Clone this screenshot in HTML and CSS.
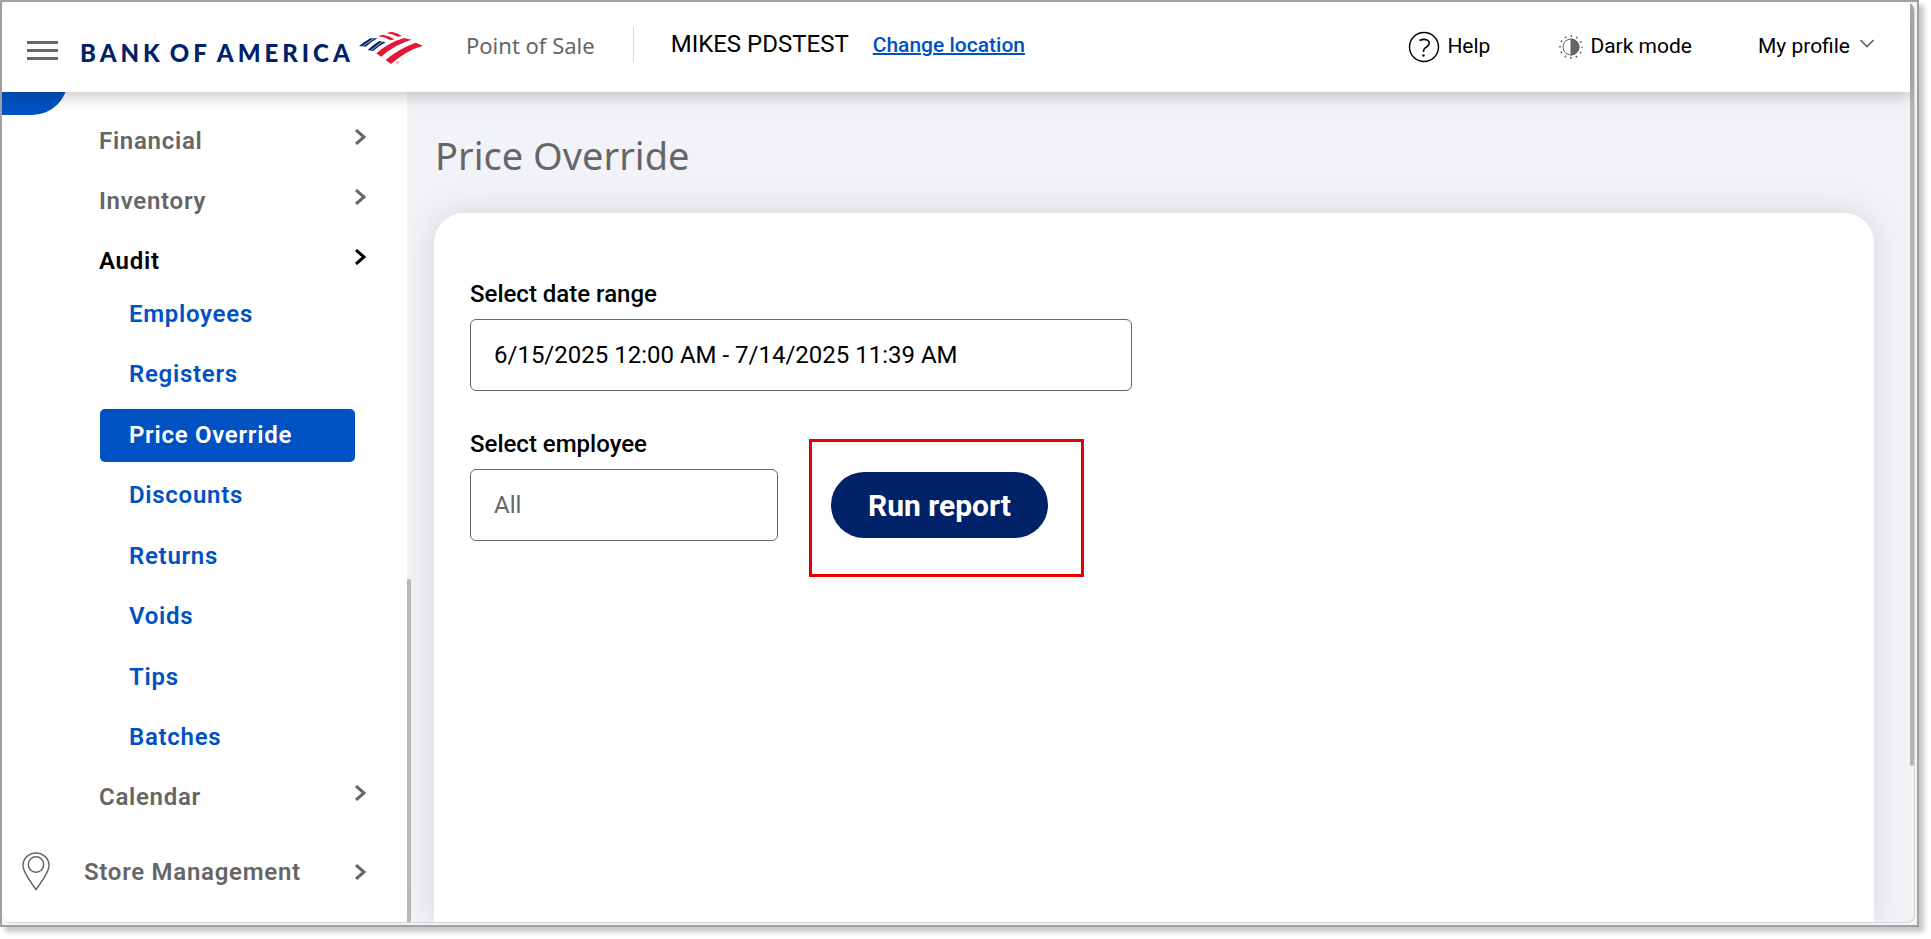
FILE: index.html
```html
<!DOCTYPE html>
<html lang="en">
<head>
  <meta charset="UTF-8">
  <title>Price Override</title>
  <link rel="stylesheet" href="styles.css">
</head>
<body>
<div class="window">
  <div class="app">
    <div class="page">
      <header class="topbar">
        <button class="menu-toggle" type="button" aria-label="Menu">
          <span></span><span></span><span></span>
        </button>
        <a class="brand" href="#" aria-label="Bank of America">
          <span class="brand-name"><span>BANK</span> <span>OF</span> <span>AMERICA</span></span>
          <svg class="brand-flag" viewBox="0 0 192 99" aria-hidden="true">
            <g fill="#012169">
              <path d="M0 42Q20 27 34 19H55Q36 30 20 44Z"/>
              <path d="M26 54Q46 36 61 27L80 31Q61 41 42 57Z"/>
            </g>
            <path d="M11 43 45 19M36 55 70 29" stroke="#fff" stroke-width="2"/>
            <g fill="#e31837">
              <path d="M84 4Q91 0 100 0Q116 3 129 12L116 14Q102 6 84 4Z"/>
              <path d="M59 13Q65 8 72 8Q91 11 107 22L94 25Q78 15 59 13Z"/>
              <path d="M52 64Q89 31 136 18L158 23Q110 36 66 74Z"/>
              <path d="M80 84Q119 50 170 32L192 41Q142 55 96 96Z"/>
            </g>
            <circle cx="116" cy="91" r="4" fill="#f4a3ae"/>
          </svg>
        </a>
        <span class="product">Point of Sale</span>
        <span class="location">MIKES PDSTEST</span>
        <a class="change" href="#">Change location</a>
        <div class="tools">
          <button class="tool" type="button">
            <svg width="32" height="32" viewBox="0 0 32 32" fill="none" stroke="#000">
              <circle cx="16" cy="16" r="14.5" stroke-width="1.4"/>
              <path d="M11.500 9.500Q16 7.500 19 9Q22.500 11 20.500 14Q19 16 16.500 17.500Q15.500 18.500 15.500 21" stroke-width="1.6"/>
              <circle cx="15.500" cy="24.500" r="1.200" fill="#000" stroke="none"/>
            </svg>
            Help
          </button>
          <button class="tool tool-dark" type="button">
            <svg width="24" height="24" viewBox="0 0 24 24" fill="none" stroke="#666">
              <circle cx="12" cy="12" r="8"/>
              <path d="M12 4A8 8 0 0 1 12 20Z" fill="#666"/>
              <circle cx="12" cy="12" r="11" stroke-width="1.800" stroke-dasharray="1.600 4.160" stroke-dashoffset=".8"/>
            </svg>
            Dark mode
          </button>
          <button class="tool tool-profile" type="button">
            My profile
            <svg width="14" height="10" viewBox="0 0 14 10" fill="none" stroke="#666" stroke-width="1.600">
              <path d="M.5 1 7 7.500 13.500 1"/>
            </svg>
          </button>
        </div>
      </header>

      <div class="columns">
        <div class="sidebar">
          <div class="home-tab"></div>
          <nav class="nav">
            <a class="item" href="#">Financial <svg class="chev" viewBox="0 0 11 16"><path d="M1 1 9 8 1 15"/></svg></a>
            <a class="item" href="#">Inventory <svg class="chev" viewBox="0 0 11 16"><path d="M1 1 9 8 1 15"/></svg></a>
            <a class="item open" href="#">Audit <svg class="chev" viewBox="0 0 11 16"><path d="M1 1 9 8 1 15"/></svg></a>
            <div class="subnav">
              <a href="#">Employees</a>
              <a href="#">Registers</a>
              <a class="current" href="#">Price Override</a>
              <a href="#">Discounts</a>
              <a href="#">Returns</a>
              <a href="#">Voids</a>
              <a href="#">Tips</a>
              <a href="#">Batches</a>
            </div>
            <a class="item" href="#">Calendar <svg class="chev" viewBox="0 0 11 16"><path d="M1 1 9 8 1 15"/></svg></a>
            <a class="item section" href="#">
              <svg class="pin" viewBox="0 0 28 40" fill="none" stroke="#666" stroke-width="1.500">
                <path d="M14 37.500Q1 20 1 13.500A13 12.500 0 0 1 27 13.500Q27 20 14 37.500Z"/>
                <circle cx="14" cy="12.500" r="7.700"/>
              </svg>
              Store Management
              <svg class="chev" viewBox="0 0 11 16"><path d="M1 1 9 8 1 15"/></svg>
            </a>
          </nav>
          <div class="track"><div class="thumb"></div></div>
        </div>

        <main class="main">
          <h1>Price Override</h1>
          <form class="card">
            <label for="range">Select date range</label>
            <input class="range" id="range" type="text" value="6/15/2025 12:00 AM - 7/14/2025 11:39 AM">
            <div class="row">
              <div class="employee">
                <label for="employee">Select employee</label>
                <input id="employee" type="text" placeholder="All">
              </div>
              <div class="callout">
                <button class="run" type="button">Run report</button>
              </div>
            </div>
          </form>
        </main>
      </div>
    </div>
    <div class="page-track"><div class="page-thumb"></div></div>
  </div>
</div>
</body>
</html>
```

FILE: styles.css
```css
* {
  box-sizing: border-box;
}
body {
  margin: 0;
  padding: 0 12px 12px 0;
  height: 100vh;
  overflow: hidden;
  background: #fff;
  color: #000;
  font-family: Roboto, "Liberation Sans", sans-serif;
}
a {
  color: inherit;
  text-decoration: none;
}
button {
  border: 0;
  padding: 0;
  background: none;
  color: inherit;
  font: inherit;
}

/* window frame */
.window {
  height: 100%;
  border: 2px solid #a0a0a0;
  padding: 0 3px 3px 0;
  background: #f4f4f4;
  box-shadow: 5px 5px 5px rgba(0, 0, 0, .22);
}
.app {
  display: flex;
  height: 100%;
  border-radius: 8px;
  overflow: hidden;
  background: #f4f4f5;
  box-shadow: 1px 1px 0 #d4d4d4;
}
.page {
  flex: 1;
  display: flex;
  flex-direction: column;
  min-width: 0;
  background: #f2f3f8;
}
.page-track {
  width: 4px;
}
.page-thumb {
  height: 83%;
  border-radius: 2px;
  background: #b5b5b5;
}

/* top bar */
.topbar {
  position: relative;
  z-index: 1;
  flex: none;
  display: flex;
  align-items: center;
  height: 90px;
  padding: 0 36px 4px 25px;
  background: #fff;
  box-shadow: 0 3px 16px rgba(0, 0, 0, .25);
}
.menu-toggle {
  display: grid;
  gap: 5px;
  width: 31px;
  margin-top: 10px;
}
.menu-toggle span {
  height: 3px;
  background: #666;
}
.brand {
  display: flex;
  align-items: center;
  margin-left: 22px;
  color: #012169;
}
.brand-name {
  display: flex;
  gap: 6px;
  width: 279px;
  margin-top: 16px;
  font: 900 24px/30px Lato, sans-serif;
  letter-spacing: 4px;
  white-space: nowrap;
}
.brand-flag {
  width: 64px;
  height: 33px;
  margin-top: 6px;
}
.product {
  margin-left: 43px;
  padding-right: 38px;
  border-right: 1px solid #d8d8d8;
  color: #666;
  font: 22px/36px "Noto Sans", sans-serif;
}
.location {
  margin-left: 37px;
  font-size: 24px;
  line-height: 30px;
  padding-bottom: 2px;
}
.change {
  margin-left: 24px;
  color: #0052c2;
  font-size: 21px;
  font-weight: 500;
  text-decoration: underline;
  text-decoration-thickness: 2px;
}
.tools {
  display: flex;
  align-items: center;
  margin-left: auto;
  padding-top: 2px;
  font-size: 21px;
}
.tool {
  display: flex;
  align-items: center;
  gap: 7px;
}
.tool svg {
  margin-top: 2px;
}
.tool-dark {
  margin-left: 69px;
}
.tool-profile {
  margin-left: 66px;
  gap: 10px;
}
.tool-profile svg {
  margin: 0 0 4px;
}

/* side menu */
.columns {
  flex: 1;
  display: flex;
  min-height: 0;
}
.sidebar {
  display: grid;
  grid-template: auto 1fr / 1fr 4px;
  width: 409px;
  background: #fff;
}
/* round tab, its top half sits behind the top bar */
.home-tab {
  width: 66px;
  height: 36px;
  margin-top: -13px;
  border-bottom-right-radius: 36px;
  background: #0052c2;
}
.nav {
  grid-row: 2;
  display: flex;
  flex-direction: column;
  margin-top: -4px;
  padding-right: 41px;
  font-size: 24px;
  font-weight: 600;
  letter-spacing: .03em;
  line-height: 28px;
  color: #666;
}
.item {
  display: flex;
  align-items: center;
  height: 60px;
  padding-left: 97px;
}
.open {
  color: #000;
}
.chev {
  width: 11px;
  height: 16px;
  margin: 0 0 8px auto;
  fill: none;
  stroke: currentColor;
  stroke-width: 3;
}
.section {
  height: 90px;
  padding-left: 20px;
}
.section .chev {
  margin-bottom: 0;
}
.pin {
  width: 28px;
  height: 40px;
  margin-right: 34px;
}
.subnav {
  display: grid;
  align-content: space-between;
  height: 476px;
  margin: -3px 11px 3px 98px;
  color: #0052c2;
}
.subnav a {
  padding: 12px 0 13px 29px;
}
.subnav .current {
  border-radius: 5px;
  background: #0052c2;
  color: #fff;
}
.track {
  grid-column: 2;
  grid-row: 1 / 3;
  display: flex;
  align-items: flex-end;
  background: #f4f4f5;
}
.thumb {
  width: 100%;
  height: 343px;
  border-radius: 2px 2px 0 0;
  background: #b8b9b9;
}

/* report form */
.main {
  flex: 1;
  display: flex;
  flex-direction: column;
  padding: 35px 36px 0 23px;
}
h1 {
  margin: 0 0 30px 1px;
  color: #666;
  font: 38px/56px "Noto Sans", sans-serif;
}
.card {
  flex: 1;
  padding: 67px 36px 0;
  border-radius: 30px 30px 0 0;
  background: #fff;
  box-shadow: 0 0 36px rgba(0, 0, 0, .12);
}
.card label {
  display: block;
  margin-bottom: 11px;
  font-size: 24px;
  font-weight: 500;
  line-height: 28px;
}
.card input {
  display: block;
  width: 100%;
  height: 72px;
  border: 1px solid #666;
  border-radius: 6px;
  padding: 0 23px;
  background: #fff;
  color: #000;
  font: 24px Roboto, sans-serif;
}
.card input::placeholder {
  color: #666;
}
.card .range {
  max-width: 662px;
}
.row {
  display: flex;
  align-items: flex-start;
  gap: 31px;
  margin-top: 39px;
}
.employee {
  width: 308px;
}
.callout {
  margin-top: 9px;
  border: 3px solid #e60000;
  padding: 30px 33px 36px 19px;
}
.run {
  height: 66px;
  padding: 0 37px;
  border-radius: 33px;
  background: #012169;
  color: #fff;
  font-size: 30px;
  font-weight: 700;
}
```
